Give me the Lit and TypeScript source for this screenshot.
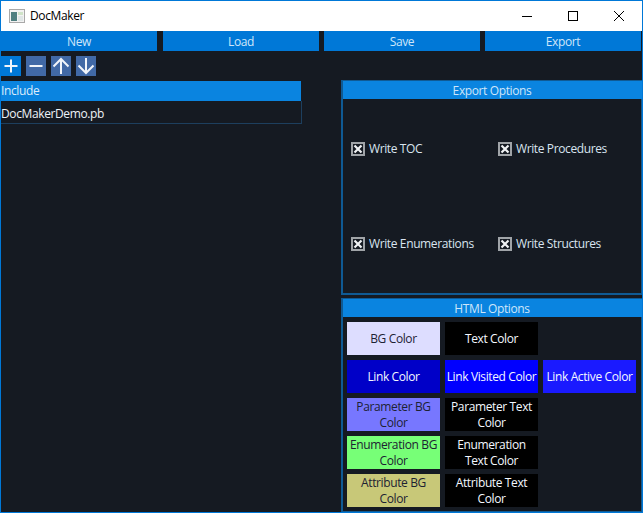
import { LitElement, html, css, svg } from "lit";
import { customElement } from "lit/decorators.js";

interface Swatch { label: string; bg: string; dark: boolean }

const SWATCHES: (Swatch | null)[] = [
  { label: "BG Color", bg: "#ddddff", dark: true },
  { label: "Text Color", bg: "#000000", dark: false },
  null,
  { label: "Link Color", bg: "#0000c8", dark: false },
  { label: "Link Visited Color", bg: "#0000ff", dark: false },
  { label: "Link Active Color", bg: "#1a1aff", dark: false },
  { label: "Parameter BG\nColor", bg: "#7777ff", dark: true },
  { label: "Parameter Text\nColor", bg: "#000000", dark: false },
  null,
  { label: "Enumeration BG\nColor", bg: "#77ff77", dark: true },
  { label: "Enumeration\nText Color", bg: "#000000", dark: false },
  null,
  { label: "Attribute BG\nColor", bg: "#c8c878", dark: true },
  { label: "Attribute Text\nColor", bg: "#000000", dark: false },
  null,
];

const TOOL_ICONS = [
  svg`<path d="M10 3.5v13M3.5 10h13"/>`,
  svg`<path d="M3.5 10h13"/>`,
  svg`<path d="M10 18V3M2.5 10.5 10 3l7.5 7.5"/>`,
  svg`<path d="M10 2v15M2.5 9.5 10 17l7.5-7.5"/>`,
];

@customElement("app-root")
export class AppRoot extends LitElement {
  static styles = css`
    :host {
      display: block;
      width: 643px;
      height: 513px;
      box-sizing: border-box;
      overflow: hidden;
      border: 1px solid #0078d7;
      background: #151a22;
      color: #eef2f7;
      font: 12px/16px "Open Sans", "Noto Sans", sans-serif;
      letter-spacing: -0.38px;
    }
    .title {
      height: 30px;
      background: #fff;
      color: #000;
      display: flex;
      align-items: center;
      padding-left: 8px;
      gap: 5px;
    }
    .title-text { flex: 1; }
    .app-icon { width: 16px; height: 16px; display: block; }
    .controls { display: flex; }
    .control {
      width: 46px;
      height: 30px;
      display: flex;
      align-items: center;
      justify-content: center;
    }
    .control svg {
      width: 12px;
      height: 12px;
      fill: none;
      stroke: #000;
      stroke-width: 1;
    }
    .menu {
      display: grid;
      grid-template-columns: 162px 161px 161px 156px;
    }
    .menu div {
      width: 156px;
      height: 20px;
      padding-top: 2px;
      box-sizing: border-box;
      background: #0078d7;
      color: #cfe6fa;
      display: flex;
      align-items: center;
      justify-content: center;
    }
    .tools {
      display: flex;
      gap: 5px;
      padding: 5px 0;
    }
    .tool {
      width: 20px;
      height: 20px;
      background: #4169a6;
    }
    .tool.active { background: #0078d7; }
    .tool svg {
      display: block;
      width: 20px;
      height: 20px;
      fill: none;
      stroke: #f0f4fa;
      stroke-width: 2;
    }
    .body {
      display: grid;
      grid-template-columns: 300px 301px;
      column-gap: 40px;
      align-items: start;
    }
    .list-head {
      height: 20px;
      background: #0a84e0;
      color: #dcecfb;
      display: flex;
      align-items: center;
    }
    .list-row {
      height: 23px;
      padding-top: 3px;
      box-sizing: border-box;
      display: flex;
      align-items: center;
      border-right: 1px solid #1d3f5e;
      border-bottom: 1px solid #1d3f5e;
      margin-right: -1px;
    }
    .panels {
      display: flex;
      flex-direction: column;
      gap: 3px;
      margin-top: -1px;
    }
    .panel {
      border: 2px solid #0f5a94;
      border-top-width: 1px;
      border-right-width: 1px;
      box-sizing: border-box;
    }
    .panel-head {
      height: 18px;
      margin-right: -1px;
      padding: 1px 1px 0 0;
      box-sizing: border-box;
      background: #0a84e0;
      color: #cfe6fa;
      display: flex;
      align-items: center;
      justify-content: center;
    }
    .export { height: 215px; }
    .checks {
      display: grid;
      grid-template-columns: 147px 1fr;
      grid-auto-rows: 95px;
      padding: 2px 0 0 8px;
      align-items: center;
    }
    .check {
      display: flex;
      align-items: center;
      gap: 4px;
      color: #d9e4f0;
    }
    .box {
      width: 14px;
      height: 14px;
      display: block;
    }
    .html-panel {
      height: 214px;
      border-bottom-width: 1px;
    }
    .swatches {
      display: grid;
      grid-template-columns: repeat(3, 93px);
      grid-auto-rows: 33px;
      gap: 5px;
      padding: 5px 0 0 4px;
    }
    .swatch {
      display: flex;
      align-items: center;
      justify-content: center;
      text-align: center;
      white-space: pre-line;
      color: #f4f8ff;
    }
    .swatch.dark { color: #1d2233; }
  `;

  private check(label: string) {
    return html`<div class="check">
      <svg class="box" viewBox="0 0 14 14">
        <rect x="1" y="1" width="12" height="12" fill="#151a22" stroke="#a0a4a8" stroke-width="2" />
        <path d="M3.5 3.5l7 7M10.5 3.5l-7 7" stroke="#f0f2f4" stroke-width="2.2" fill="none" />
      </svg>
      <span>${label}</span>
    </div>`;
  }

  render() {
    return html`
      <div class="title">
        <svg class="app-icon" viewBox="0 0 16 16">
          <rect x="0.5" y="1.5" width="15" height="13" fill="#f2f2f2" stroke="#a9a9a9" />
          <rect x="2" y="4" width="6" height="9" fill="#4f7f80" />
          <rect x="9" y="4" width="5" height="3" fill="#cfe3c8" />
          <rect x="9" y="8" width="5" height="5" fill="#dfe6e6" />
        </svg>
        <span class="title-text">DocMaker</span>
        <div class="controls">
          <div class="control"><svg viewBox="0 0 12 12"><path d="M1 6.5h10" /></svg></div>
          <div class="control"><svg viewBox="0 0 12 12"><rect x="1.5" y="1.5" width="9" height="9" /></svg></div>
          <div class="control"><svg viewBox="0 0 12 12"><path d="M1 1l10 10M11 1 1 11" /></svg></div>
        </div>
      </div>
      <div class="menu">
        ${["New", "Load", "Save", "Export"].map((t) => html`<div>${t}</div>`)}
      </div>
      <div class="tools">
        ${TOOL_ICONS.map(
          (p, i) => html`<div class="tool ${i === 0 ? "active" : ""}"><svg viewBox="0 0 20 20">${p}</svg></div>`
        )}
      </div>
      <div class="body">
        <div>
          <div class="list-head">Include</div>
          <div class="list-row">DocMakerDemo.pb</div>
        </div>
        <div class="panels">
          <div class="panel export">
            <div class="panel-head">Export Options</div>
            <div class="checks">
              ${this.check("Write TOC")}${this.check("Write Procedures")}
              ${this.check("Write Enumerations")}${this.check("Write Structures")}
            </div>
          </div>
          <div class="panel html-panel">
            <div class="panel-head">HTML Options</div>
            <div class="swatches">
              ${SWATCHES.map((s) =>
                s
                  ? html`<div class="swatch ${s.dark ? "dark" : ""}" style="background:${s.bg}">${s.label}</div>`
                  : html`<div></div>`
              )}
            </div>
          </div>
        </div>
      </div>
    `;
  }
}
